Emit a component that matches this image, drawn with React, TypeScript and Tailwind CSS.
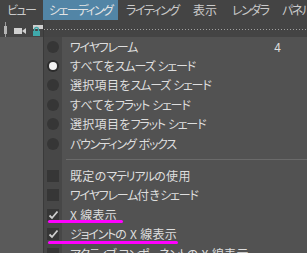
import React from "react";

const font = "font-['Noto_Sans_CJK_JP','Noto_Sans',sans-serif] [font-feature-settings:'palt']";

type Item = { label: string; kind: "radio" | "radioOn" | "box" | "check"; right?: string };

const group1: Item[] = [
  { label: "ワイヤフレーム", kind: "radio", right: "4" },
  { label: "すべてをスムーズ シェード", kind: "radioOn" },
  { label: "選択項目をスムーズ シェード", kind: "radio" },
  { label: "すべてをフラット シェード", kind: "radio" },
  { label: "選択項目をフラット シェード", kind: "radio" },
  { label: "バウンディング ボックス", kind: "radio" },
];

const group2: Item[] = [
  { label: "既定のマテリアルの使用", kind: "box" },
  { label: "ワイヤフレーム付きシェード", kind: "box" },
  { label: "X 線表示", kind: "check" },
  { label: "ジョイントの X 線表示", kind: "check" },
  { label: "アクティブ コンポーネントの X 線表示", kind: "box" },
];

// Katakana in the reference UI font is condensed: tighten katakana runs only.
function Txt({ s, menu }: { s: string; menu?: boolean }) {
  const parts = s.split(/([\u30A0-\u30FF]+)/);
  return (
    <span>
      {parts.map((p, i) =>
        /[\u30A0-\u30FF]/.test(p) ? (
          <span key={i} className={menu ? "tracking-[-1.5px]" : "tracking-[-1.2px]"}>
            {p}
          </span>
        ) : (
          <span key={i} className={menu ? "" : "tracking-[0.3px]"}>
            {p}
          </span>
        )
      )}
    </span>
  );
}

function Marker({ kind }: { kind: Item["kind"] }) {
  if (kind === "radio")
    return <div className="w-[12px] h-[12px] rounded-full bg-[#363636]" />;
  if (kind === "radioOn")
    return (
      <div className="w-[12px] h-[12px] rounded-full bg-[#2c2c2c] flex items-center justify-center">
        <div className="w-[8px] h-[8px] rounded-full bg-[#f2f2f2]" />
      </div>
    );
  if (kind === "box") return <div className="w-[12px] h-[12px] bg-[#363636]" />;
  return (
    <div className="w-[12px] h-[12px] bg-[#363636] flex items-center justify-center">
      <svg width="11" height="10" viewBox="0 0 11 10">
        <path d="M1.5 5.5 L4 8 L9.5 1.5" fill="none" stroke="#cfcfcf" strokeWidth="1.8" />
      </svg>
    </div>
  );
}

function Row({ item }: { item: Item }) {
  return (
    <div className="flex h-[19.4px] shrink-0 items-center">
      <div className="w-[18px] h-full bg-[#474747] flex items-center justify-center">
        <Marker kind={item.kind} />
      </div>
      <div className="flex-1 flex items-center pl-[8px] text-[12px] text-[#dedede] whitespace-nowrap">
        <Txt s={item.label} />
        {item.right && <span className="ml-auto mr-[26px]">{item.right}</span>}
      </div>
    </div>
  );
}

export default function App() {
  return (
    <div className={`w-[307px] h-[253px] overflow-hidden bg-[#444444] relative ${font}`}>
      {/* menu bar */}
      <div className="h-[20px] flex items-stretch text-[12px] text-[#cacaca] whitespace-nowrap">
        <div className="w-[43px] shrink-0 pl-[7px] flex items-center"><Txt s="ビュー" menu /></div>
        <div className="w-[75px] shrink-0 pl-[6px] flex items-center bg-[#5285a6] text-[#e4e4e4]"><Txt s="シェーディング" menu /></div>
        <div className="w-[67px] shrink-0 pl-[8px] flex items-center"><Txt s="ライティング" menu /></div>
        <div className="w-[39px] shrink-0 pl-[8px] flex items-center">表示</div>
        <div className="w-[50px] shrink-0 pl-[8px] flex items-center"><Txt s="レンダラ" menu /></div>
        <div className="shrink-0 pl-[8px] flex items-center"><Txt s="パネル" menu /></div>
      </div>
      {/* body */}
      <div className="flex h-[233px]">
        {/* left viewport panel */}
        <div className="w-[43px] shrink-0 flex flex-col">
          <div className="h-[17px] shrink-0 bg-[#444444] relative">
            <svg width="43" height="17" viewBox="0 0 43 17" className="absolute left-0 top-0">
              <rect x="5" y="2" width="1" height="15" fill="#9a9a9a" />
              <rect x="4" y="6" width="3" height="8" fill="#b4b4b4" />
              <rect x="14" y="8" width="8" height="6" fill="#d0d0d0" />
              <path d="M22 11 L26 8 L26 14 Z" fill="#d0d0d0" />
              <rect x="33" y="5" width="10" height="4" fill="#cfcfcf" />
              <path d="M34.5 11 V9.5 a2 2 0 0 1 4 0 V11" fill="none" stroke="#3fa9ab" strokeWidth="1.3" />
              <rect x="33" y="11" width="7" height="5" fill="#3fa9ab" />
            </svg>
          </div>
          <div className="flex-1 bg-[#5a5a5a]" />
        </div>
        <div className="w-[1px] shrink-0 bg-[#3a3a3a]" />
        {/* dropdown */}
        <div className="flex-1 flex flex-col bg-[#525252] overflow-hidden">
          <div className="h-[17px] shrink-0 bg-[#444444] pt-[9px]">
            <div className="w-full h-[1px] bg-[repeating-linear-gradient(90deg,#a0a0a0_0_1px,transparent_1px_3px)]" />
          </div>
          {group1.map((it) => (
            <Row key={it.label} item={it} />
          ))}
          <div className="flex h-[13px] shrink-0">
            <div className="w-[18px] bg-[#474747]" />
            <div className="flex-1 flex items-center pl-[4px]">
              <div className="w-full h-[1px] bg-[#6a6a6a]" />
            </div>
          </div>
          {group2.map((it) => (
            <Row key={it.label} item={it} />
          ))}
        </div>
      </div>
      {/* annotation underlines */}
      <div className="absolute left-[48px] top-[220px] w-[75px] h-[3px] rounded-full bg-[#ff00ff]" />
      <div className="absolute left-[48px] top-[241px] w-[130px] h-[3px] rounded-full bg-[#ff00ff]" />
    </div>
  );
}
